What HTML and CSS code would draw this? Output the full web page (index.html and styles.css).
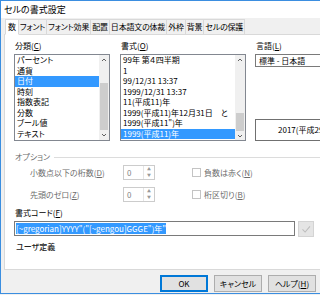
FILE: index.html
```html
<!DOCTYPE html>
<html lang="ja">
<head>
<meta charset="utf-8">
<title>セルの書式設定</title>
<link rel="stylesheet" href="styles.css">
</head>
<body>
<div class="window">
  <div class="titlebar">セルの書式設定</div>
  <div class="dialog">
    <div class="tabs">
      <div class="tab sel">数</div>
      <div class="tab">フォント</div>
      <div class="tab">フォント効果</div>
      <div class="tab">配置</div>
      <div class="tab">日本語文の体裁</div>
      <div class="tab">外枠</div>
      <div class="tab">背景</div>
      <div class="tab">セルの保護</div>
    </div>
    <div class="page">
      <div class="top">
        <div class="col cat">
          <div class="lbl">分類(<u>C</u>)</div>
          <div class="list">
            <div class="items">
              <div class="item">パーセント</div>
              <div class="item">通貨</div>
              <div class="item sel">日付</div>
              <div class="item">時刻</div>
              <div class="item">指数表記</div>
              <div class="item">分数</div>
              <div class="item">ブール値</div>
              <div class="item">テキスト</div>
            </div>
            <div class="scroll">
              <svg class="arrow" viewBox="0 0 10 10"><polyline points="3,6 5,4 7,6" /></svg>
              <div class="track"><div class="thumb thumb-cat"></div></div>
              <svg class="arrow" viewBox="0 0 10 10"><polyline points="3,4 5,6 7,4" /></svg>
            </div>
          </div>
        </div>
        <div class="col fmt">
          <div class="lbl">書式(<u>O</u>)</div>
          <div class="list">
            <div class="items">
              <div class="item">99年 第４四半期</div>
              <div class="item">1</div>
              <div class="item">99/12/31 13:37</div>
              <div class="item">1999/12/31 13:37</div>
              <div class="item">11(平成11)年</div>
              <div class="item">1999(平成11)年12月31日　と</div>
              <div class="item">1999(平成11")年</div>
              <div class="item sel">1999(平成11)年</div>
            </div>
            <div class="scroll">
              <svg class="arrow" viewBox="0 0 10 10"><polyline points="3,6 5,4 7,6" /></svg>
              <div class="track"><div class="thumb thumb-fmt"></div></div>
              <svg class="arrow" viewBox="0 0 10 10"><polyline points="3,4 5,6 7,4" /></svg>
            </div>
          </div>
        </div>
        <div class="col lang">
          <div class="lbl">言語(<u>L</u>)</div>
          <div class="combo">標準 - 日本語</div>
          <div class="preview">2017(平成29)年</div>
        </div>
      </div>

      <div class="options">
        <div class="opt-head"><span>オプション</span><div class="rule"></div></div>
        <div class="opt-rows">
          <div class="opt-row">
            <div class="opt-lbl">小数点以下の桁数(<u>D</u>)</div>
            <div class="spin"><span class="val">0</span><div class="spin-btns"><span>▲</span><span>▼</span></div></div>
            <div class="check"><span class="box"></span>負数は赤く(<u>N</u>)</div>
          </div>
          <div class="opt-row">
            <div class="opt-lbl">先頭のゼロ(<u>Z</u>)</div>
            <div class="spin"><span class="val">0</span><div class="spin-btns"><span>▲</span><span>▼</span></div></div>
            <div class="check"><span class="box"></span>桁区切り(<u>B</u>)</div>
          </div>
        </div>
      </div>

      <div class="lbl code-lbl">書式コード(<u>F</u>)</div>
      <div class="code-row">
        <div class="code-input"><span class="selected">[~gregorian]YYYY"("[~gengou]GGGE")年"</span></div>
        <div class="ok-btn">
          <svg viewBox="0 0 16 16"><polyline points="4,8.5 7,11.5 12.5,5" /></svg>
        </div>
      </div>
      <div class="user-def">ユーザ定義</div>
    </div>
    <div class="buttons">
      <div class="btn default">OK</div>
      <div class="btn">キャンセル</div>
      <div class="btn">ヘルプ(<u>H</u>)</div>
    </div>
  </div>
</div>
</body>
</html>
```

FILE: styles.css
```css
html, body {
  margin: 0;
  padding: 0;
}
body {
  width: 320px;
  height: 295px;
  overflow: hidden;
  background: #f0f0f0;
  font-family: "Noto Sans CJK JP", "Noto Sans", sans-serif;
  font-size: 8px;
  font-feature-settings: "palt" 1;
  color: #000;
}
u {
  text-decoration: underline;
  text-underline-offset: 1px;
}
.window {
  box-sizing: border-box;
  width: 380px;
  height: 294px;
  border: 1px solid #3b8ee0;
  border-right: none;
  background: #f0f0f0;
  overflow: hidden;
}
.titlebar {
  height: 17px;
  line-height: 17px;
  background: #fff;
  padding-left: 3px;
  font-size: 9px;
}
.dialog {
  padding: 1px 0 0 3px;
}
.tabs {
  display: flex;
  height: 16px;
  padding-left: 1px;
  position: relative;
  z-index: 1;
}
.tab {
  box-sizing: border-box;
  height: 16px;
  line-height: 14px;
  padding: 0 1px;
  border: 1px solid #d9d9d9;
  border-left: none;
  background: #f0f0f0;
  letter-spacing: -0.2px;
}
.tab:first-child {
  border-left: 1px solid #d9d9d9;
}
.tab.sel {
  background: #fff;
  border-bottom-color: #fff;
  padding: 0 2px;
}
.page {
  box-sizing: border-box;
  height: 236px;
  margin-top: -1px;
  border: 1px solid #d9d9d9;
  background: #fff;
  padding: 5px 0 0 9px;
}
.top {
  display: flex;
}
.lbl {
  height: 14px;
  line-height: 12px;
  padding-left: 1px;
}
.col.cat { width: 96px; }
.col.fmt { width: 126px; margin-left: 10px; }
.col.lang { flex: 1; margin-left: 9px; }
.list {
  box-sizing: border-box;
  height: 87px;
  border: 1px solid #828790;
  display: flex;
  background: #fff;
}
.items {
  flex: 1;
  overflow: hidden;
}
.item {
  height: 10.5px;
  line-height: 10.5px;
  padding-left: 2px;
  white-space: nowrap;
}
.item.sel {
  background: #3399ff;
  color: #fff;
}
.scroll {
  width: 10px;
  background: #f0f0f0;
  display: flex;
  flex-direction: column;
}
.arrow {
  width: 10px;
  height: 10px;
  flex: none;
}
.arrow polyline {
  fill: none;
  stroke: #606060;
  stroke-width: 1;
}
.track {
  flex: 1;
}
.thumb {
  background: #cdcdcd;
  width: 8px;
  margin-left: 1px;
}
.thumb-cat { margin-top: 18px; height: 47px; }
.thumb-fmt { margin-top: 48px; height: 18px; }
.combo {
  box-sizing: border-box;
  height: 13px;
  line-height: 11px;
  border: 1px solid #7a7a7a;
  padding-left: 3px;
  white-space: nowrap;
}
.preview {
  box-sizing: border-box;
  height: 22px;
  margin-top: 52px;
  line-height: 20px;
  border: 1px solid #707070;
  padding-left: 22px;
  white-space: nowrap;
}
.options {
  margin-top: 11px;
  color: #6d6d6d;
}
.opt-head {
  display: flex;
  align-items: center;
  height: 10px;
  line-height: 10px;
  padding-left: 1px;
}
.opt-head .rule {
  flex: 1;
  height: 1px;
  background: #dcdcdc;
  margin-left: 4px;
}
.opt-rows {
  margin-top: 3px;
  display: flex;
  flex-direction: column;
  gap: 7px;
}
.opt-row {
  display: flex;
  align-items: center;
  height: 15px;
}
.opt-lbl {
  width: 93px;
  padding-left: 16px;
  white-space: nowrap;
}
.spin {
  box-sizing: border-box;
  width: 32px;
  height: 15px;
  border: 1px solid #cccccc;
  display: flex;
  align-items: center;
  justify-content: space-between;
}
.spin .val {
  padding-left: 3px;
  color: #838383;
}
.spin-btns {
  width: 10px;
  height: 13px;
  display: flex;
  flex-direction: column;
  align-items: center;
  font-size: 4px;
  line-height: 6px;
  color: #9a9a9a;
  border-left: 1px solid #e6e6e6;
}
.check {
  display: flex;
  align-items: center;
  margin-left: 37px;
  white-space: nowrap;
}
.check .box {
  box-sizing: border-box;
  width: 9px;
  height: 9px;
  border: 1px solid #c4c4c4;
  margin-right: 3px;
}
.code-lbl {
  margin-top: 6px;
  height: 10px;
  line-height: 10px;
}
.code-row {
  display: flex;
  margin-top: 3px;
}
.code-input {
  box-sizing: border-box;
  width: 281px;
  height: 15px;
  border: 1px solid #7a7a7a;
  padding: 1px 1px;
  line-height: 11px;
  white-space: nowrap;
}
.code-input .selected {
  background: #3399ff;
  color: #fff;
  display: inline-block;
  height: 11px;
}
.ok-btn {
  box-sizing: border-box;
  width: 16px;
  height: 16px;
  margin-left: 3px;
  background: #e5e5e5;
  border: 1px solid #d4d4d4;
}
.ok-btn svg {
  display: block;
  width: 14px;
  height: 14px;
}
.ok-btn polyline {
  fill: none;
  stroke: #bdbdbd;
  stroke-width: 1.2;
}
.user-def {
  margin-top: 5px;
  height: 10px;
  line-height: 10px;
  padding-left: 2px;
  color: #222;
  font-weight: 500;
}
.buttons {
  display: flex;
  gap: 6px;
  padding: 5px 0 0 156px;
}
.btn {
  box-sizing: border-box;
  width: 48px;
  height: 17px;
  line-height: 15px;
  text-align: center;
  border: 1px solid #adadad;
  background: #e1e1e1;
}
.btn.default {
  border: 1px solid #0078d7;
  box-shadow: inset 0 0 0 1px #0078d7;
}
```
